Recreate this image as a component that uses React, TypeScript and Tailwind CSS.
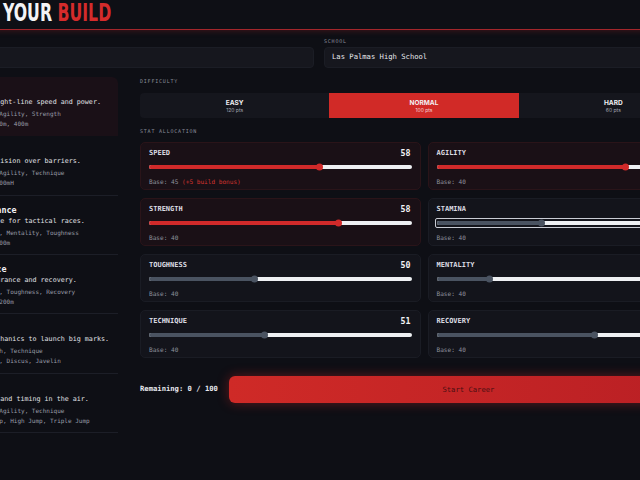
type Archetype = {
  name: string;
  blurb: string;
  keys: string;
  events: string;
};

type Stat = {
  name: string;
  value: number;
  base: number;
  bonus?: number;
  key?: boolean;
  focused?: boolean;
};

const archetypes: Archetype[] = [
  { name: "Sprinter", blurb: "Elite straight-line speed and power.", keys: "Key: Speed, Agility, Strength", events: "Ev: 100m, 200m, 400m" },
  { name: "Hurdler", blurb: "Speed, precision over barriers.", keys: "Key: Speed, Agility, Technique", events: "Ev: 100mH, 400mH" },
  { name: "Mid-Distance", blurb: "Kicks & pace for tactical races.", keys: "Key: Stamina, Mentality, Toughness", events: "Ev: 800m, 1500m" },
  { name: "Resilience", blurb: "Strong endurance and recovery.", keys: "Key: Stamina, Toughness, Recovery", events: "Ev: 1600m, 3200m" },
  { name: "Thrower", blurb: "Power & mechanics to launch big marks.", keys: "Key: Strength, Technique", events: "Ev: Shot Put, Discus, Javelin" },
  { name: "Jumper", blurb: "Leg spring and timing in the air.", keys: "Key: Speed, Agility, Technique", events: "Ev: Long Jump, High Jump, Triple Jump" },
];

const stats: Stat[] = [
  { name: "Speed", value: 58, base: 45, bonus: 5, key: true },
  { name: "Agility", value: 58, base: 40, key: true },
  { name: "Strength", value: 58, base: 40, key: true },
  { name: "Stamina", value: 50, base: 40, focused: true },
  { name: "Toughness", value: 50, base: 40 },
  { name: "Mentality", value: 45, base: 40 },
  { name: "Technique", value: 51, base: 40 },
  { name: "Recovery", value: 55, base: 40 },
];

const difficulties = [
  { label: "EASY", pts: 120 },
  { label: "NORMAL", pts: 100 },
  { label: "HARD", pts: 60 },
];

const MAX_STAT = 65;
const mono = "font-['DejaVu_Sans_Mono','Liberation_Mono',monospace]";

const SectionLabel = ({ children }: { children: string }) => (
  <p className={`${mono} text-[5px] leading-[8px] tracking-[0.8px] text-[#8b8e9b] uppercase`}>
    {children}
  </p>
);

const StatSlider = ({ stat }: { stat: Stat }) => {
  // bonus stats start their range at the boosted base
  const lo = stat.bonus ? stat.base : 40;
  const pct = ((stat.value - lo) / (MAX_STAT - lo)) * 100;
  const fill = stat.key ? "bg-[#d12a2a]" : "bg-[#4a5361]";

  const track = (
    <div className="relative h-[4px] w-full rounded-full bg-[#eef0f3]">
      <div className={`absolute left-0 top-0 h-full rounded-full ${fill}`} style={{ width: `${pct}%` }} />
      <div
        className={`absolute top-1/2 h-[7px] w-[7px] -translate-y-1/2 rounded-full ${fill}`}
        style={{ left: `calc(${pct}% - 3.5px)` }}
      />
    </div>
  );

  if (stat.focused) {
    return (
      <div className="-mx-[2px] rounded-[2px] border border-[#c9ccd4] px-[1px] py-[2px]">{track}</div>
    );
  }
  return <div className="py-[3px]">{track}</div>;
};

const StatCard = ({ stat }: { stat: Stat }) => (
  <div
    className={`flex h-[48px] flex-col rounded-[5px] border px-[8px] pt-[5px] ${
      stat.key ? "border-[#2a1419] bg-[#1a1016]" : "border-[#1a1c24] bg-[#13141b]"
    }`}
  >
    <div className="flex items-center justify-between">
      <span className={`${mono} text-[7px] leading-[10px] font-bold text-[#dcdde3] uppercase`}>{stat.name}</span>
      <span className={`${mono} pr-[1px] text-[8.3px] leading-[10px] font-bold text-[#f1f1f4]`}>{stat.value}</span>
    </div>
    <div className="mt-[4px]">
      <StatSlider stat={stat} />
    </div>
    <p className={`${mono} mt-[5px] text-[6.1px] leading-[9px] text-[#8d909c]`}>
      Base: {stat.base}
      {stat.bonus ? <span className="text-[#d3332e]"> (+{stat.bonus} build bonus)</span> : null}
    </p>
  </div>
);

const ArchetypeRow = ({ item, active }: { item: Archetype; active: boolean }) => (
  <div
    className={`h-[59.33px] border-b pl-[26px] pr-2 pt-[8px] ${
      active ? "rounded-tr-[6px] border-transparent bg-[#1a1017]" : "border-[#1c1e27]"
    }`}
  >
    <p className={`${mono} text-[8.4px] leading-[12px] font-bold whitespace-nowrap text-[#f2f2f5]`}>{item.name}</p>
    <p className={`${mono} text-[6.7px] leading-[11px] whitespace-nowrap text-[#e0e1e6]`}>{item.blurb}</p>
    <p className={`${mono} text-[6px] leading-[11px] whitespace-nowrap text-[#999ca8]`}>{item.keys}</p>
    <p className={`${mono} text-[6px] leading-[10px] whitespace-nowrap text-[#999ca8]`}>{item.events}</p>
  </div>
);

export default function App() {
  return (
    <div className="h-[480px] w-[640px] overflow-hidden bg-[#0e0f15]">
      <div className="ml-[-70px] w-[778px]">
        {/* header */}
        <div className="h-[30px] border-b border-[#a3262b] shadow-[0_1px_6px_rgba(200,40,40,0.25)]">
          <h1 className="origin-left scale-x-[0.7] pl-[1px] pt-[1px] font-['Liberation_Sans_Narrow','DejaVu_Sans_Condensed',sans-serif] text-[25px] leading-[24px] font-bold whitespace-nowrap">
            <span className="text-[#f3f3f5]">CREATE YOUR </span>
            <span className="text-[#d42b2b]">BUILD</span>
          </h1>
        </div>

        {/* identity */}
        <div className="mt-[7px] grid grid-cols-2 gap-[10px]">
          <div>
            <div className="h-[10px]" />
            <div className="h-[21px] rounded-[4px] border border-[#1b1d25] bg-[#16171e]" />
          </div>
          <div>
            <SectionLabel>School</SectionLabel>
            <div className="mt-[2px] flex h-[21px] items-center rounded-[4px] border border-[#1b1d25] bg-[#16171e] px-[7px]">
              <span className={`${mono} text-[7.2px] text-[#e6e7ec]`}>Las Palmas High School</span>
            </div>
          </div>
        </div>

        <div className="mt-[9px] flex gap-[22px]">
          {/* archetypes */}
          <div className="w-[188px] shrink-0">
            {archetypes.map((a, i) => (
              <ArchetypeRow key={a.name} item={a} active={i === 0} />
            ))}
          </div>

          {/* build */}
          <div className="flex-1">
            <SectionLabel>Difficulty</SectionLabel>
            <div className="mt-[8px] grid h-[25px] grid-cols-3 rounded-[4px] bg-[#15161d]">
              {difficulties.map((d) => (
                <div
                  key={d.label}
                  className={`flex flex-col items-center justify-center font-['Inter',sans-serif] ${
                    d.label === "NORMAL" ? "bg-[#d12a27]" : ""
                  }`}
                >
                  <span className="text-[6.5px] leading-[8px] font-bold text-[#f1f1f4]">{d.label}</span>
                  <span className={`text-[5px] leading-[6px] ${d.label === "NORMAL" ? "text-[#f5d6d6]" : "text-[#a3a6b1]"}`}>
                    {d.pts} pts
                  </span>
                </div>
              ))}
            </div>

            <div className="mt-[9px]">
              <SectionLabel>Stat Allocation</SectionLabel>
            </div>
            <div className="mt-[7px] grid grid-cols-2 gap-x-[7px] gap-y-[8px]">
              {stats.map((s) => (
                <StatCard key={s.name} stat={s} />
              ))}
            </div>

            <div className="mt-[18px] flex items-center gap-[11px]">
              <span className={`${mono} text-[7.2px] font-bold whitespace-nowrap text-[#e8e9ee]`}>Remaining: 0 / 100</span>
              <button className="flex h-[27px] flex-1 items-center justify-center rounded-[6px] bg-gradient-to-r from-[#cf2a27] to-[#b91f24] shadow-[0_0_12px_rgba(220,38,38,0.4)]">
                <span className={`${mono} text-[7.2px] leading-[10px] text-[#4a0f12]`}>Start Career</span>
              </button>
            </div>
          </div>
        </div>
      </div>
    </div>
  );
}
